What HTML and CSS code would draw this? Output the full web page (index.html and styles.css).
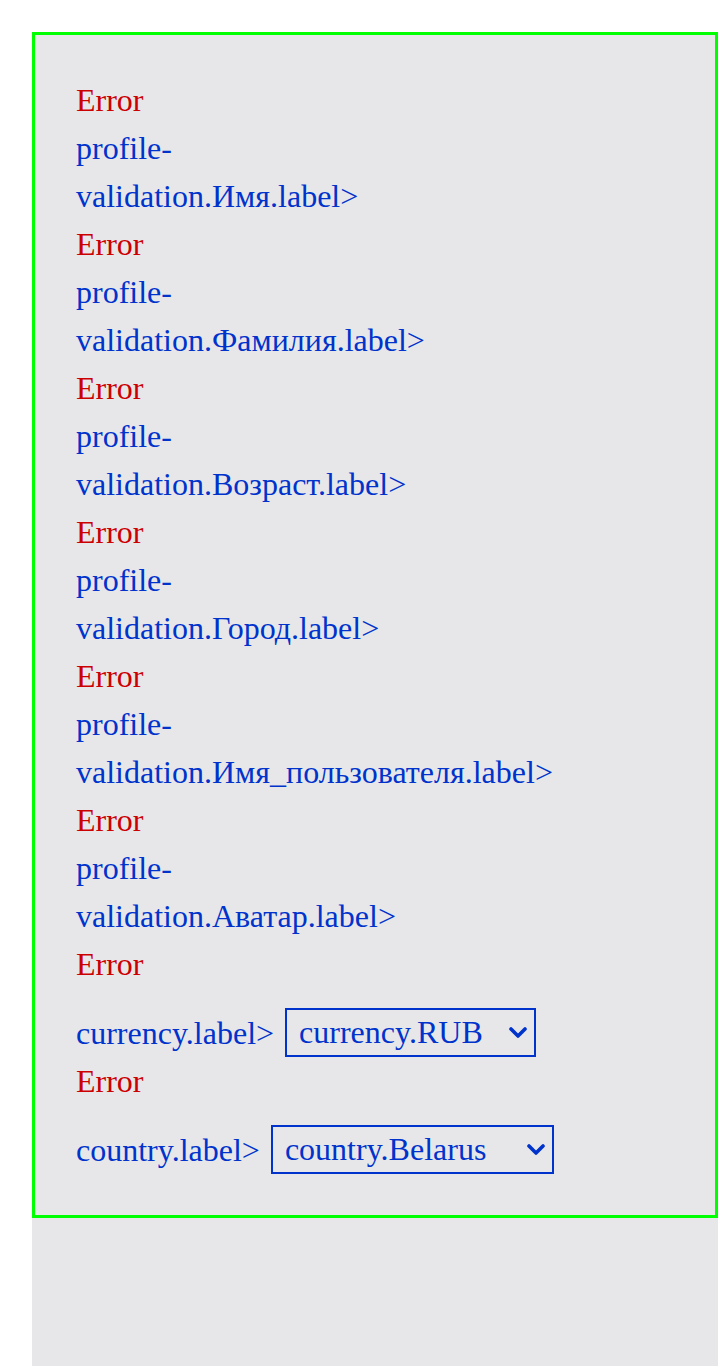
FILE: index.html
```html
<!DOCTYPE html>
<html lang="ru">
<head>
<meta charset="utf-8">
<title>Profile</title>
<link rel="stylesheet" href="styles.css">
</head>
<body>
<div class="page">
  <main class="panel">
    <form class="profile-form">
      <div class="error">Error</div>
      <label class="field-label">profile-validation.Имя.label&gt;</label>
      <div class="error">Error</div>
      <label class="field-label">profile-validation.Фамилия.label&gt;</label>
      <div class="error">Error</div>
      <label class="field-label">profile-validation.Возраст.label&gt;</label>
      <div class="error">Error</div>
      <label class="field-label">profile-validation.Город.label&gt;</label>
      <div class="error">Error</div>
      <label class="field-label">profile-validation.Имя_пользователя.label&gt;</label>
      <div class="error">Error</div>
      <label class="field-label">profile-validation.Аватар.label&gt;</label>
      <div class="error">Error</div>

      <div class="select-row">
        <label class="row-label" for="currency">currency.label&gt;</label>
        <span class="select-wrap">
          <select id="currency" class="select select-currency">
            <option>currency.RUB</option>
          </select>
          <svg class="chevron" viewBox="0 0 18 12" aria-hidden="true"><polyline points="2,2 9,9 16,2" fill="none" stroke="#0033cc" stroke-width="3.6" stroke-linecap="round" stroke-linejoin="round"/></svg>
        </span>
      </div>
      <div class="error">Error</div>

      <div class="select-row">
        <label class="row-label" for="country">country.label&gt;</label>
        <span class="select-wrap">
          <select id="country" class="select select-country">
            <option>country.Belarus</option>
          </select>
          <svg class="chevron" viewBox="0 0 18 12" aria-hidden="true"><polyline points="2,2 9,9 16,2" fill="none" stroke="#0033cc" stroke-width="3.6" stroke-linecap="round" stroke-linejoin="round"/></svg>
        </span>
      </div>
    </form>
  </main>
</div>
</body>
</html>
```

FILE: styles.css
```css
html, body {
  margin: 0;
  padding: 0;
  background: #ffffff;
}

body {
  font-family: "Liberation Serif", "Times New Roman", serif;
  font-size: 32px;
  line-height: 48px;
  color: #0033cc;
}

.page {
  padding: 32px 0 0 32px;
  min-height: 100vh;
  box-sizing: border-box;
  display: flex;
  flex-direction: column;
}

.panel {
  flex: 1;
  background: #e7e7ea;
}

.profile-form {
  border: 3px solid #00ff00;
  padding: 41px 38px 41px 41px;
  display: flex;
  flex-direction: column;
  align-items: flex-start;
}

.error {
  color: #cc0000;
  height: 48px;
}

.field-label {
  display: block;
  width: min-content;
  color: #0033cc;
}

.select-row {
  display: flex;
  align-items: center;
  gap: 11px;
  margin-top: 20px;
}

.row-label {
  color: #0033cc;
}

.select-wrap {
  position: relative;
  display: inline-flex;
}

.select {
  -webkit-appearance: none;
  appearance: none;
  box-sizing: border-box;
  height: 49px;
  margin: 0;
  padding: 0 0 0 12px;
  border: 2px solid #0033cc;
  border-radius: 0;
  background: transparent;
  color: #0033cc;
  font-family: "Liberation Serif", "Times New Roman", serif;
  font-size: 32px;
  line-height: 45px;
}

.select-currency {
  width: 251px;
}

.select-country {
  width: 283px;
}

.chevron {
  position: absolute;
  right: 9px;
  top: 50%;
  width: 18px;
  height: 12px;
  margin-top: -6px;
  pointer-events: none;
}
```
